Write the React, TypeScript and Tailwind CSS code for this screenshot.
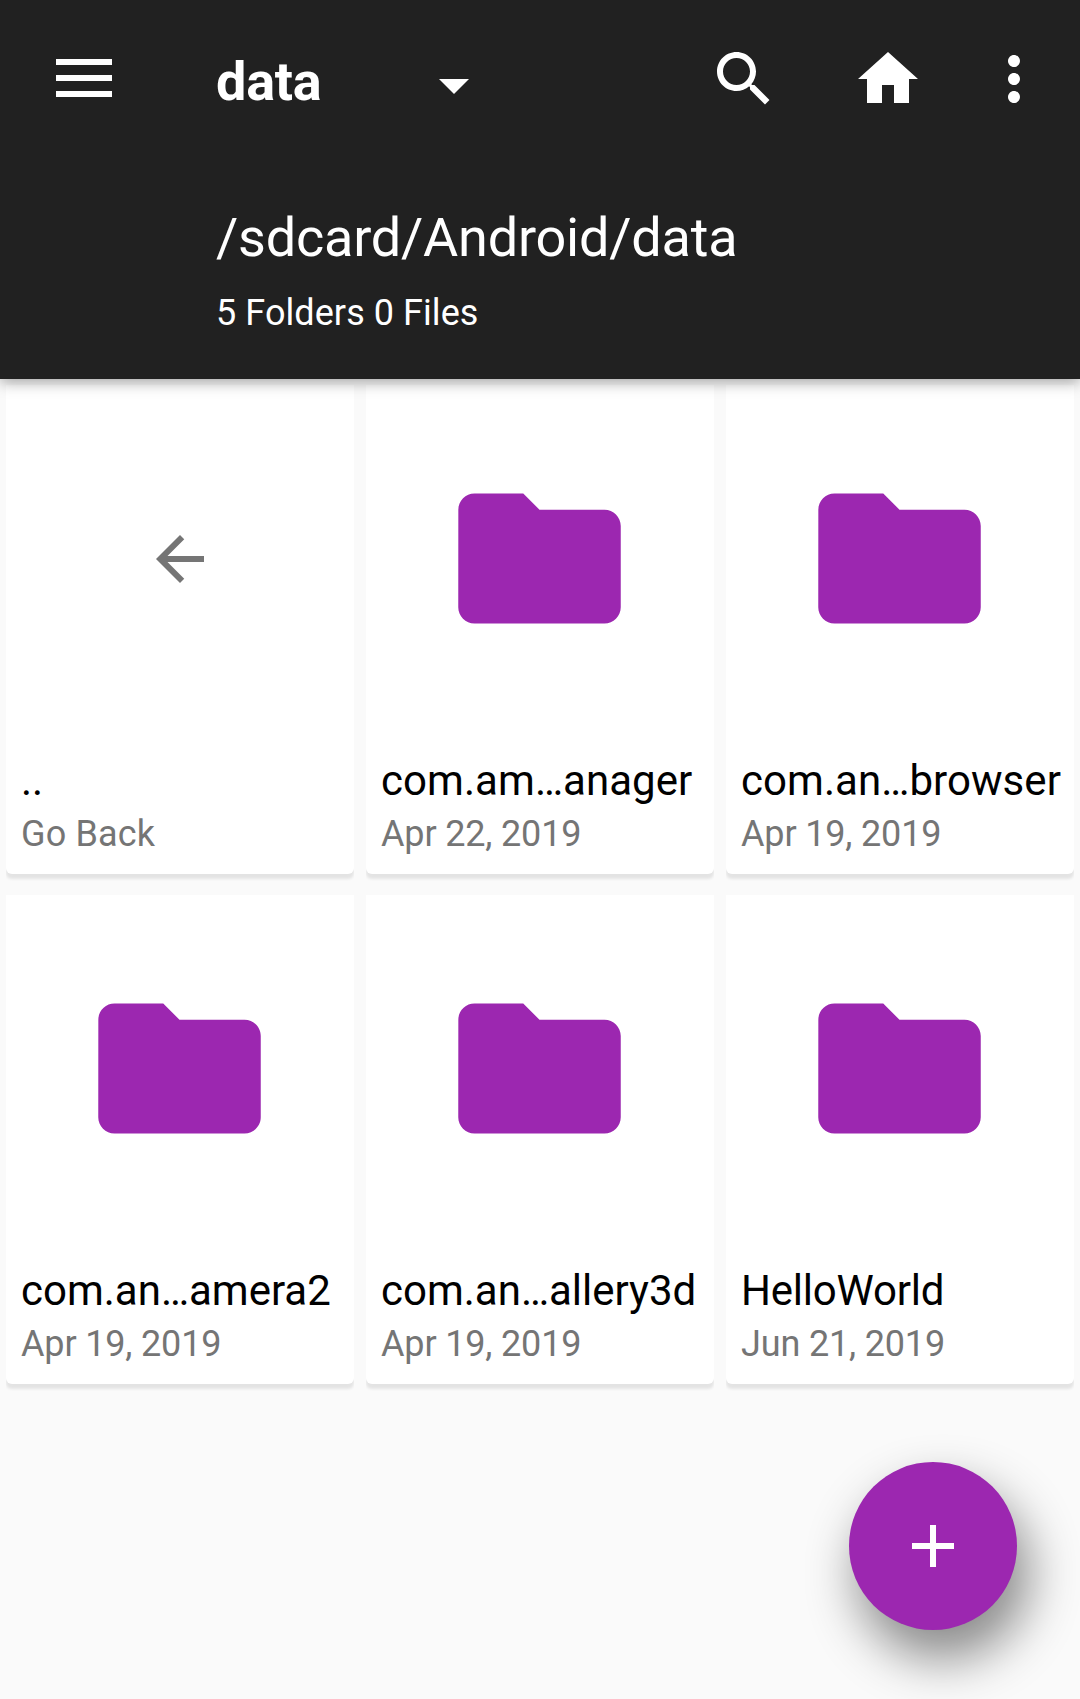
import type { ReactNode } from "react";

type Entry = { name: string; detail: string; parent?: boolean; nameClass?: string };

const entries: Entry[] = [
  { name: "..", detail: "Go Back", parent: true },
  { name: "com.am…anager", detail: "Apr 22, 2019", nameClass: "tracking-[0.06px]" },
  { name: "com.an…browser", detail: "Apr 19, 2019", nameClass: "tracking-[0.06px]" },
  { name: "com.an…amera2", detail: "Apr 19, 2019" },
  { name: "com.an…allery3d", detail: "Apr 19, 2019" },
  { name: "HelloWorld", detail: "Jun 21, 2019", nameClass: "tracking-[-0.2px]" },
];

function Icon({ d, className }: { d: string; className: string }) {
  return (
    <svg viewBox="0 0 24 24" fill="currentColor" className={className}>
      <path d={d} />
    </svg>
  );
}

function IconButton({ label, className = "", children }: { label: string; className?: string; children: ReactNode }) {
  return (
    <button aria-label={label} className={`block shrink-0 ${className}`}>
      {children}
    </button>
  );
}

function Header() {
  return (
    <header className="relative z-10 h-[379px] bg-[#212121] text-white shadow-[0_3px_14px_rgba(0,0,0,0.36)]">
      <div className="flex h-[158px] items-start pt-[43px] pl-14 pr-[30px]">
        <IconButton label="Menu" className="mt-4 w-14">
          <span className="flex flex-col gap-2.5">
            <span className="block h-1.5 bg-white" />
            <span className="block h-1.5 bg-white" />
            <span className="block h-1.5 bg-white" />
          </span>
        </IconButton>
        <h1 className="ml-[104px] mt-[7px] w-[202px] text-[54px] leading-[64px] font-bold tracking-[-0.25px]">data</h1>
        <IconButton label="Choose folder" className="mt-[7px]">
          <Icon className="size-[72px]" d="M7 9.7l5 5 5-5z" />
        </IconButton>
        <div className="ml-auto flex">
          <IconButton label="Search" className="mr-[72px]">
            <Icon
              className="size-[72px]"
              d="M15.5 14h-.79l-.28-.27C15.41 12.59 16 11.11 16 9.5 16 5.91 13.09 3 9.5 3S3 5.91 3 9.5 5.91 16 9.5 16c1.61 0 3.09-.59 4.23-1.57l.27.28v.79l5 4.99L20.49 19l-4.99-5zm-6 0C7.01 14 5 11.99 5 9.5S7.01 5 9.5 5 14 7.01 14 9.5 11.99 14 9.5 14z"
            />
          </IconButton>
          <IconButton label="Home" className="mr-[54px]">
            <Icon className="size-[72px]" d="M10 20v-6h4v6h5v-8h3L12 3 2 12h3v8z" />
          </IconButton>
          <IconButton label="More options">
            <Icon
              className="size-[72px]"
              d="M12 8c1.1 0 2-.9 2-2s-.9-2-2-2-2 .9-2 2 .9 2 2 2zm0 2c-1.1 0-2 .9-2 2s.9 2 2 2 2-.9 2-2-.9-2-2-2zm0 6c-1.1 0-2 .9-2 2s.9 2 2 2 2-.9 2-2-.9-2-2-2z"
            />
          </IconButton>
        </div>
      </div>
      <div className="flex flex-col gap-[22px] pl-[216px] pt-12">
        <p className="text-[54px] leading-[64px] tracking-[-0.21px]">/sdcard/Android/data</p>
        <p className="text-[36px] leading-[42px] tracking-[0.07px]">5 Folders 0 Files</p>
      </div>
    </header>
  );
}

function Card({ entry }: { entry: Entry }) {
  return (
    <article className="h-[489px] rounded-b-[6px] bg-white shadow-[0_5px_3px_rgba(0,0,0,0.09)] [clip-path:inset(0_0_-20px_0)]">
      <div className="flex h-[348px] items-center justify-center">
        {entry.parent ? (
          <Icon
            className="size-[72px] text-[#757575]"
            d="M20 11H7.83l5.59-5.59L12 4l-8 8 8 8 1.41-1.41L7.83 13H20v-2z"
          />
        ) : (
          <Icon
            className="mr-px mb-px size-[195px] text-[#9c27b0]"
            d="M10 4H4c-1.1 0-1.99.9-1.99 2L2 18c0 1.1.9 2 2 2h16c1.1 0 2-.9 2-2V8c0-1.1-.9-2-2-2h-8l-2-2z"
          />
        )}
      </div>
      <div className="flex flex-col gap-[7px] whitespace-nowrap pl-[15px] pt-[23px]">
        <h2 className={`text-[42px] leading-[50px] text-black ${entry.nameClass ?? ""}`}>{entry.name}</h2>
        <p
          className={`text-[36px] leading-[42px] text-[#757575] ${entry.parent ? "tracking-[0.15px]" : "tracking-[-0.16px]"}`}
        >
          {entry.detail}
        </p>
      </div>
    </article>
  );
}

export default function App() {
  return (
    <div className="relative h-[1699px] w-[1080px] overflow-hidden bg-[#fafafa] font-['Roboto',sans-serif]">
      <Header />
      <main className="grid grid-cols-3 gap-x-3 gap-y-[21px] px-1.5 pt-1.5">
        {entries.map((entry) => (
          <Card key={entry.name} entry={entry} />
        ))}
      </main>
      <button
        aria-label="Add"
        className="absolute right-[63px] bottom-[69px] flex size-[168px] items-center justify-center rounded-full bg-[#9c27b0] text-white shadow-[10px_27px_50px_2px_rgba(0,0,0,0.45)]"
      >
        <Icon className="size-[72px]" d="M19 13h-6v6h-2v-6H5v-2h6V5h2v6h6v2z" />
      </button>
    </div>
  );
}
